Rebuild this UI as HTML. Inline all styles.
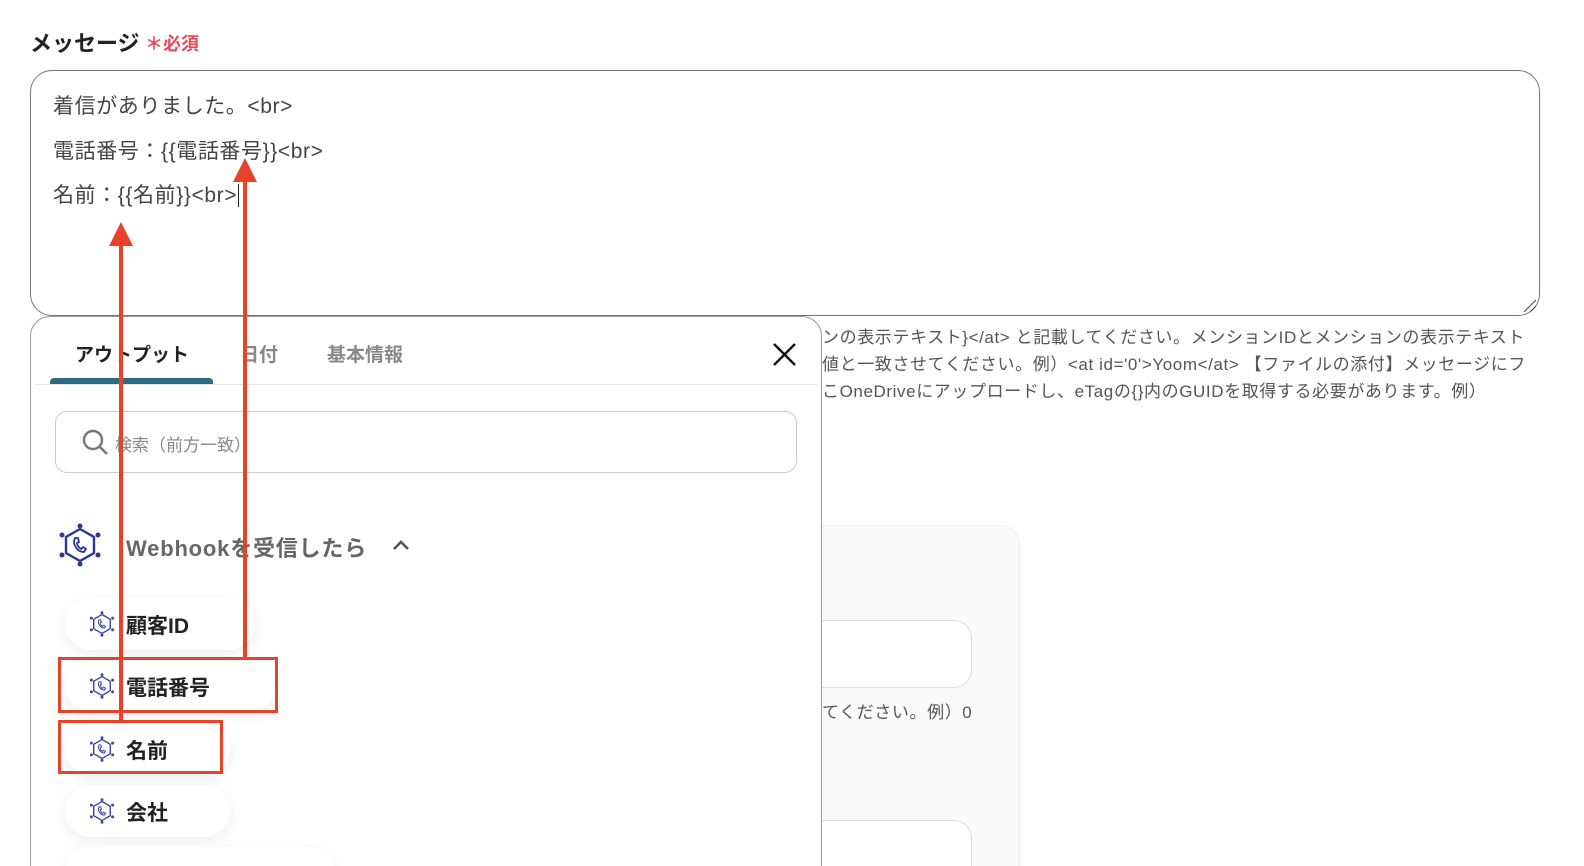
<!DOCTYPE html>
<html style="width:1584px;height:866px;overflow:hidden"><head><meta charset="utf-8"><style>
*{margin:0;padding:0;box-sizing:border-box}
body{width:1584px;height:866px;overflow:hidden;background:#fff;font-family:"Liberation Sans","Noto Sans CJK JP",sans-serif;position:relative}
.abs{position:absolute;white-space:nowrap}
.ta{position:absolute;left:30px;top:70px;width:1510px;height:246px;border:1px solid #777;border-radius:22px}
.tl{position:absolute;left:53px;font-size:21px;color:#444;letter-spacing:0.6px;white-space:nowrap}
.help{position:absolute;left:822px;font-size:17px;color:#555;white-space:nowrap;letter-spacing:0.6px}
.card{position:absolute;left:800px;top:525px;width:220px;height:360px;background:#fafafa;border:1px solid #eee;border-radius:20px}
.inp{position:absolute;left:800px;width:172px;height:68px;background:#fff;border:1px solid #ddd;border-radius:18px}
.panel{position:absolute;left:30px;top:316px;width:792px;height:560px;background:#fff;border:1px solid #999;border-radius:20px 20px 0 0}
.tab{position:absolute;top:340px;font-size:19px;font-weight:bold;color:#888}
.pill{position:absolute;left:65px;height:52px;border-radius:26px;background:#fff;box-shadow:0 4px 14px rgba(0,0,0,.07);}
.pill span{position:absolute;left:61px;top:12px;font-size:21px;font-weight:bold;color:#222}
.pill svg{position:absolute;left:24px;top:13px}
.rb{position:absolute;border:3px solid #e8432a}
</style></head><body>
<div class="abs" style="left:30px;top:26px;font-size:22px;font-weight:bold;color:#222">メッセージ</div>
<div class="abs" style="left:145px;top:30px;font-size:18px;font-weight:bold;color:#e54b5b">＊必須</div>
<div class="ta"></div>
<svg class="abs" style="left:1522px;top:298px" width="16" height="16"><path d="M2 14L14 2M8 14L14 8" stroke="#555" stroke-width="1.2"/></svg>
<div class="tl" style="top:90px">着信がありました。&lt;br&gt;</div>
<div class="tl" style="top:135px">電話番号：{{電話番号}}&lt;br&gt;</div>
<div class="tl" style="top:179px">名前：{{名前}}&lt;br&gt;<span style="border-left:1px solid #222;margin-left:1px"></span></div>
<div class="help" style="top:323px">ンの表示テキスト}&lt;/at&gt; と記載してください。メンションIDとメンションの表示テキスト</div>
<div class="help" style="top:350px">値と一致させてください。例）&lt;at id='0'&gt;Yoom&lt;/at&gt; 【ファイルの添付】メッセージにフ</div>
<div class="help" style="top:377px">こOneDriveにアップロードし、eTagの{}内のGUIDを取得する必要があります。例）</div>
<div class="card"></div>
<div class="inp" style="top:620px"></div>
<div class="help" style="top:698px">てください。例）0</div>
<div class="inp" style="top:820px"></div>
<div class="panel"></div>
<div class="tab" style="left:75px;color:#222">アウトプット</div>
<div class="tab" style="left:240px">日付</div>
<div class="tab" style="left:327px">基本情報</div>
<div class="abs" style="left:50px;top:378px;width:163px;height:6px;background:#2f6a85;border-radius:4px 4px 0 0"></div>
<div class="abs" style="left:35px;top:384px;width:783px;height:1px;background:#e5e5e5"></div>
<svg class="abs" style="left:773px;top:343px" width="23" height="23"><path d="M1 1L22 22M22 1L1 22" stroke="#111" stroke-width="2.4"/></svg>
<div class="abs" style="left:55px;top:411px;width:742px;height:62px;border:1px solid #ccc;border-radius:12px"></div>
<svg class="abs" style="left:82px;top:429px" width="28" height="28"><circle cx="11" cy="11" r="9" fill="none" stroke="#777" stroke-width="2.4"/><path d="M17.5 17.5L25 25" stroke="#777" stroke-width="2.6"/></svg>
<div class="abs" style="left:115px;top:431px;font-size:17px;color:#888">検索（前方一致）</div>
<svg class="abs" style="left:58px;top:523px" width="44" height="44" viewBox="0 0 44 44"><g fill="none" stroke="#2b3990" stroke-width="2.4"><path d="M22 6L36 14V30L22 38L8 30V14Z"/><path d="M17 15c-3 6 2 14 9 14l2-3-3-2-2 2c-2-1-4-4-4-6l2-1-1-4z" stroke-width="1.8"/></g><g fill="#2b3990"><circle cx="22" cy="3" r="2.5"/><circle cx="22" cy="41" r="2.5"/><circle cx="4" cy="12" r="2.5"/><circle cx="40" cy="12" r="2.5"/><circle cx="4" cy="32" r="2.5"/><circle cx="40" cy="32" r="2.5"/></g></svg>
<div class="abs" style="left:126px;top:531px;font-size:22px;font-weight:bold;color:#666;letter-spacing:0.8px">Webhookを受信したら</div>
<svg class="abs" style="left:392px;top:539px" width="18" height="12"><path d="M2 10L9 3L16 10" fill="none" stroke="#555" stroke-width="2.6"/></svg>
<div class="pill" style="top:598px;width:190px"><svg width="26" height="26" viewBox="0 0 44 44"><use href="#ic"/></svg><span>顧客ID</span></div>
<div class="pill" style="top:660px;width:210px"><svg width="26" height="26" viewBox="0 0 44 44"><use href="#ic"/></svg><span>電話番号</span></div>
<div class="pill" style="top:723px;width:165px"><svg width="26" height="26" viewBox="0 0 44 44"><use href="#ic"/></svg><span>名前</span></div>
<div class="pill" style="top:785px;width:165px"><svg width="26" height="26" viewBox="0 0 44 44"><use href="#ic"/></svg><span>会社</span></div>
<div class="pill" style="top:847px;width:270px"></div>
<svg width="0" height="0" style="position:absolute"><defs><g id="ic"><g fill="none" stroke="#3a4aa0" stroke-width="2.4"><path d="M22 6L36 14V30L22 38L8 30V14Z"/><path d="M17 15c-3 6 2 14 9 14l2-3-3-2-2 2c-2-1-4-4-4-6l2-1-1-4z" stroke-width="1.8"/></g><g fill="#3a4aa0"><circle cx="22" cy="3" r="2.5"/><circle cx="22" cy="41" r="2.5"/><circle cx="4" cy="12" r="2.5"/><circle cx="40" cy="12" r="2.5"/><circle cx="4" cy="32" r="2.5"/><circle cx="40" cy="32" r="2.5"/></g></g></defs></svg>
<div class="rb" style="left:58px;top:657px;width:220px;height:56px"></div>
<div class="rb" style="left:58px;top:720px;width:165px;height:54px"></div>
<svg class="abs" style="left:0;top:0" width="400" height="866"><g fill="#e8432a"><rect x="119" y="240" width="4" height="481"/><path d="M109 246L121 222L133 246Z"/><rect x="243" y="178" width="4" height="480"/><path d="M233 182L245 158L257 182Z"/></g></svg>
</body></html>
